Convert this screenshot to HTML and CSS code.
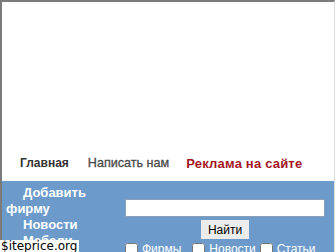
FILE: index.html
```html
<!DOCTYPE html>
<html lang="ru">
<head>
  <meta charset="UTF-8">
  <title>Каталог мебели</title>
  <link rel="stylesheet" href="styles.css">
</head>
<body>

<div class="page">
  <div class="banner"></div>

  <div class="nav">
    <a href="#" class="nav-home">Главная</a>
    <a href="#" class="nav-mail">Написать нам</a>
    <a href="#" class="nav-ads">Реклама на сайте</a>
  </div>

  <div class="main">
    <div class="side">
      <a href="#">Добавить фирму</a>
      <a href="#">Новости</a>
      <a href="#">Мебели</a>
    </div>
    <div class="search">
      <input type="text" class="search-input">
      <button class="search-btn">Найти</button>
      <div class="checks">
        <label><input type="checkbox"> Фирмы</label>
        <label><input type="checkbox"> Новости</label>
        <label><input type="checkbox"> Статьи</label>
      </div>
    </div>
  </div>
</div>

<div class="badge">$iteprice.org</div>

</body>
</html>
```

FILE: styles.css
```css
body {
  margin: 0;
  padding: 0;
  font-family: "Liberation Sans", Arial, sans-serif;
  background: #fff;
  overflow: hidden;
  height: 252px;
}
.page {
  border-top: 2px solid #7b7b7b;
  border-left: 2px solid #7b7b7b;
  border-right: 1px solid #ddd;
  margin-right: 1px;
  height: 250px;
  overflow: hidden;
}
.banner {
  height: 143px;
}
.nav {
  height: 36px;
  display: flex;
  align-items: center;
  padding: 0 0 0 18px;
  box-sizing: border-box;
  font-size: 12px;
  font-weight: bold;
}
.nav a {
  text-decoration: none;
}
.nav-home {
  color: #333;
  margin-right: 19px;
}
.nav-mail {
  color: #4a4a4a;
  font-size: 12.6px;
  font-weight: normal;
  -webkit-text-stroke: 0.3px #4a4a4a;
  margin-right: 17px;
}
.nav-ads {
  color: #a3161f;
  font-size: 13px;
  letter-spacing: 0.2px;
}
.main {
  display: flex;
  background: #6c9bcb;
  height: 80px;
}
.side {
  width: 118px;
  padding: 4px 0 0 4px;
  box-sizing: border-box;
}
.side a {
  display: block;
  color: #fff;
  font-size: 13px;
  font-weight: bold;
  line-height: 16px;
  text-decoration: none;
  text-indent: 17px;
}
.search {
  padding: 18px 0 0 4px;
  width: 202px;
  display: flex;
  flex-direction: column;
  align-items: center;
}
.search-input {
  width: 200px;
  height: 18px;
  box-sizing: border-box;
  border: 1px solid #8a9fb5;
  margin: 0;
  padding: 0;
}
.search-btn {
  margin-top: 3px;
  width: 48px;
  height: 19px;
  padding: 0;
  border: none;
  background: #ececec;
  font-family: "Liberation Sans", Arial, sans-serif;
  font-size: 12px;
  color: #000;
}
.checks {
  display: flex;
  width: 100%;
  margin-top: 3px;
  font-size: 12px;
  color: #fff;
}
.checks label {
  display: flex;
  align-items: center;
  width: 68px;
}
.checks input {
  margin: 0 4px 0 1px;
  width: 13px;
  height: 13px;
}
.badge {
  position: absolute;
  left: 0;
  top: 240px;
  background: #fff;
  color: #000;
  font-family: "DejaVu Sans", sans-serif;
  font-size: 12px;
  line-height: 12px;
  padding: 0 2px 0 1px;
}
```
